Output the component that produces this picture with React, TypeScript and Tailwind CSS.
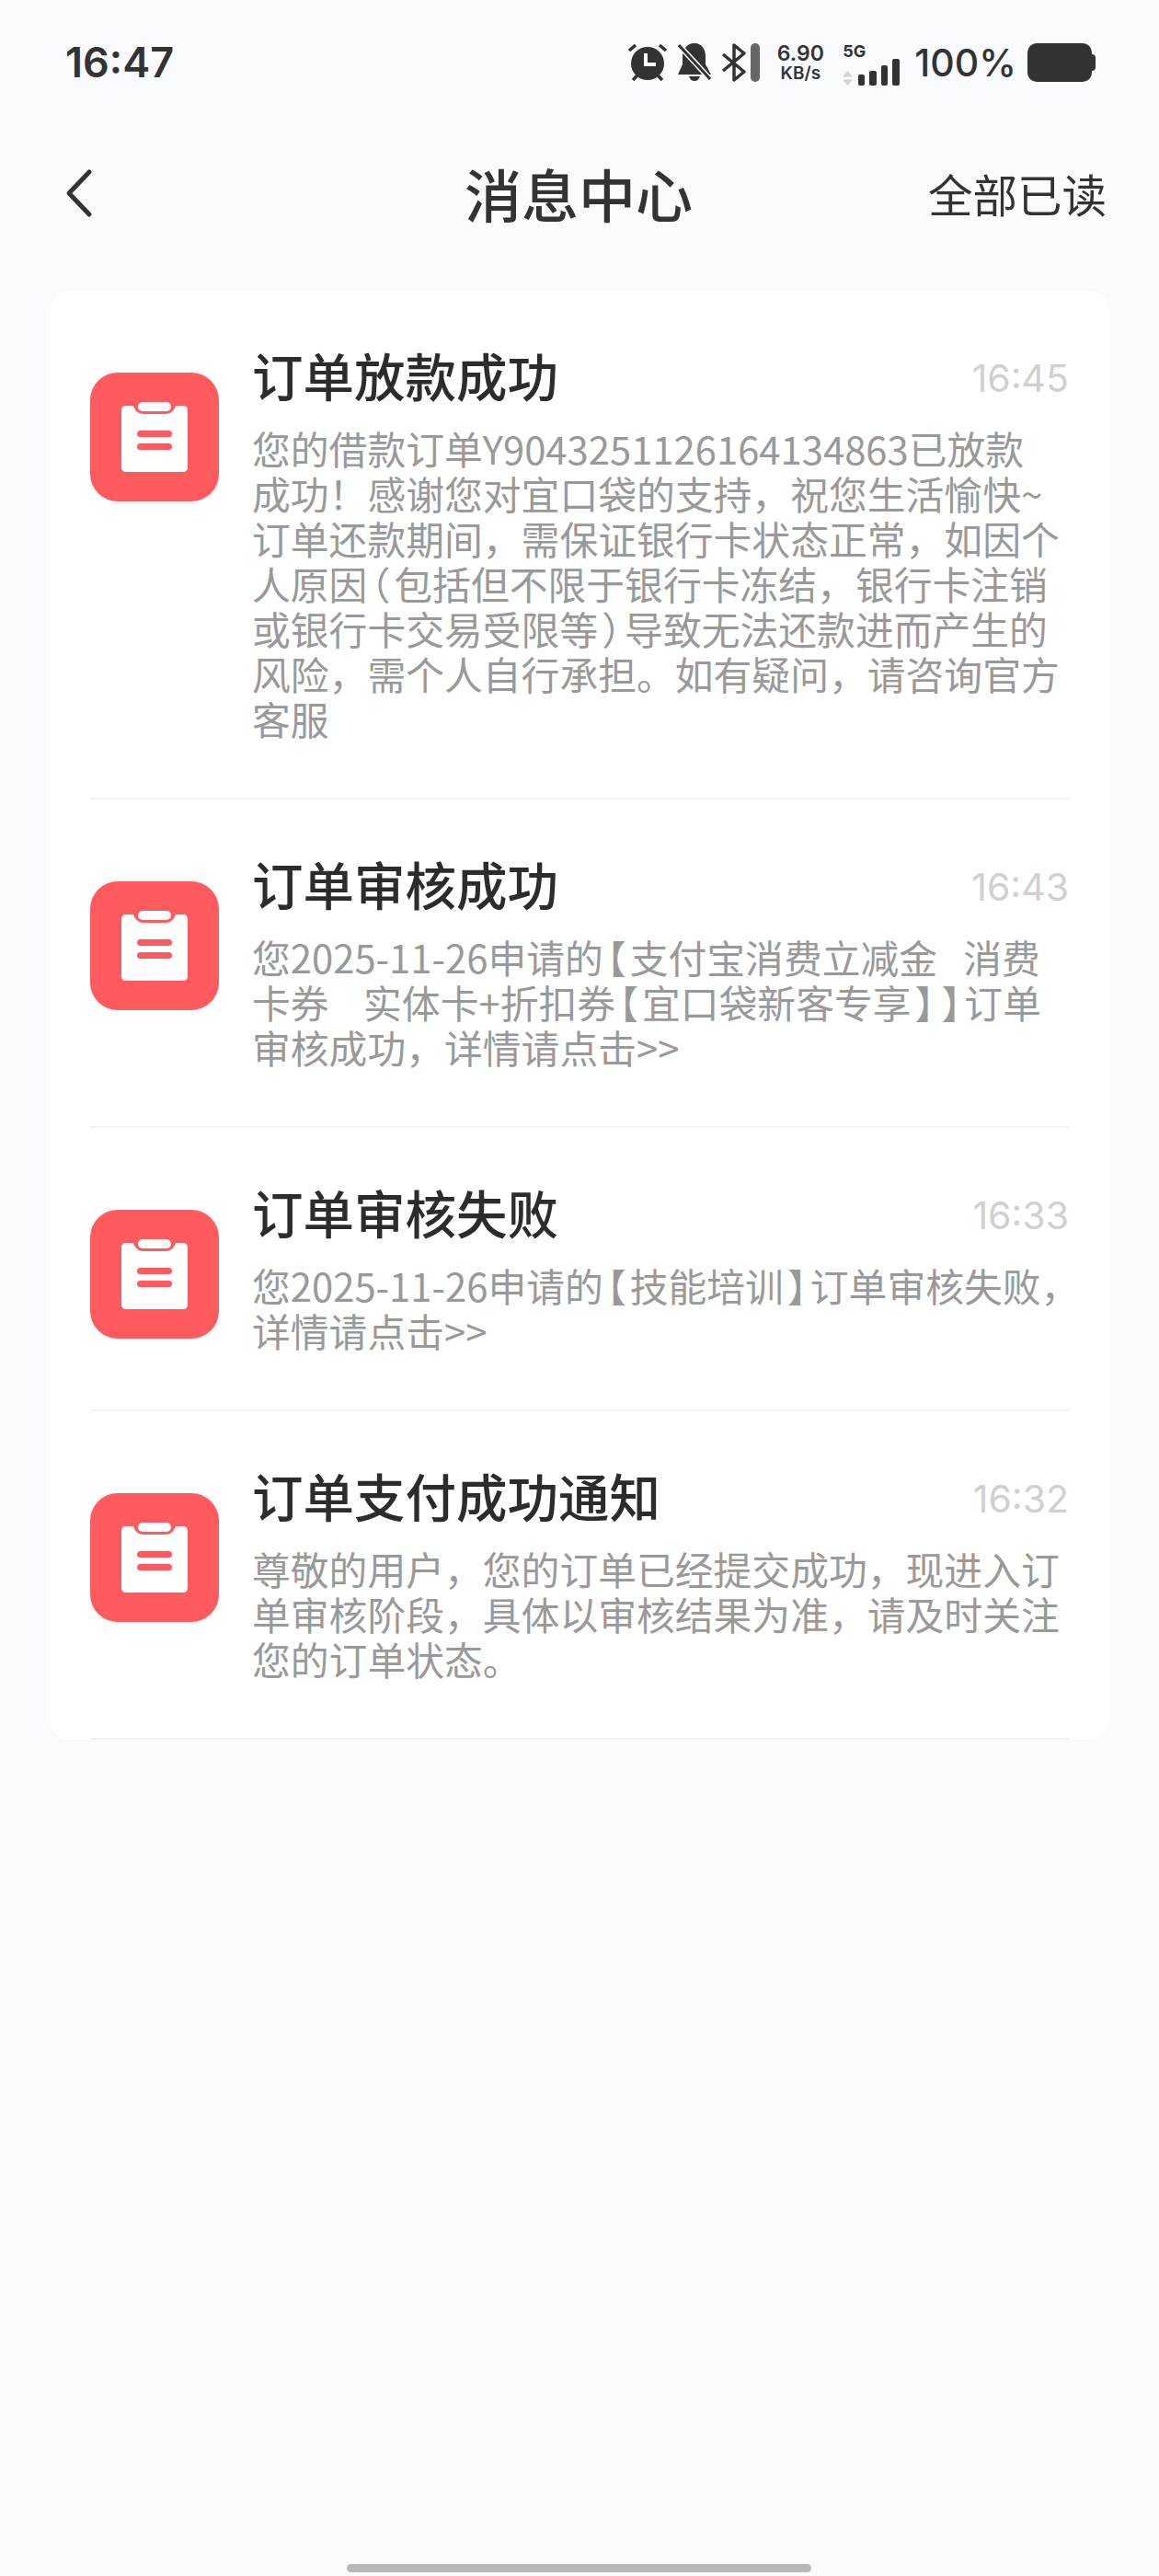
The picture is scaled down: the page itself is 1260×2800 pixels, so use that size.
const items = [
  {
    title: "订单放款成功",
    time: "16:45",
    lines: [
      "您的借款订单Y9043251126164134863已放款",
      "成功！感谢您对宜口袋的支持，祝您生活愉快~",
      "订单还款期间，需保证银行卡状态正常，如因个",
      "人原因（包括但不限于银行卡冻结，银行卡注销",
      "或银行卡交易受限等）导致无法还款进而产生的",
      "风险，需个人自行承担。如有疑问，请咨询官方",
      "客服",
    ],
  },
  {
    title: "订单审核成功",
    time: "16:43",
    lines: [
      "您2025-11-26申请的【支付宝消费立减金   消费",
      "卡券    实体卡+折扣券【宜口袋新客专享】】订单",
      "审核成功，详情请点击>>",
    ],
  },
  {
    title: "订单审核失败",
    time: "16:33",
    lines: ["您2025-11-26申请的【技能培训】订单审核失败，", "详情请点击>>"],
  },
  {
    title: "订单支付成功通知",
    time: "16:32",
    lines: [
      "尊敬的用户，您的订单已经提交成功，现进入订",
      "单审核阶段，具体以审核结果为准，请及时关注",
      "您的订单状态。",
    ],
  },
];

// brackets and parens are narrower in the reference font
function BodyLine({ text }: { text: string }) {
  const parts = text.split(/([【】（）])/);
  return (
    <div className="whitespace-pre">
      {parts.map((part, i) =>
        /^[【】（）]$/.test(part) ? (
          <span key={i} className="px-[4px] [font-feature-settings:'halt']">
            {part}
          </span>
        ) : (
          part
        ),
      )}
    </div>
  );
}

function ClipboardIcon() {
  return (
    <svg width="140" height="140" viewBox="0 0 140 140" className="mt-[29px] shrink-0">
      <rect width="140" height="140" rx="30" fill="#ff5a5d" />
      <path
        d="M39 36h8c2 6 6 9 11 9h24c5 0 9-3 11-9h8c3 0 5 2 5 5v62c0 3-2 5-5 5H39c-3 0-5-2-5-5V41c0-3 2-5 5-5z"
        fill="#fff"
      />
      <rect x="52" y="32" width="36" height="10" rx="5" fill="#fff" />
      <rect x="51" y="63" width="38" height="7" rx="3.5" fill="#ff5a5d" />
      <rect x="51" y="77" width="38" height="7" rx="3.5" fill="#ff5a5d" />
    </svg>
  );
}

function StatusIcons() {
  return (
    <div className="flex items-center text-[#333]">
      <svg width="44" height="42" viewBox="0 0 44 42" fill="none" className="mr-[11px]">
        <circle cx="22" cy="22" r="18" fill="#333" />
        <path d="M20 11v12h11" stroke="#fff" strokeWidth="4" />
        <path d="M2 8l7-6M42 8l-7-6M6 40l5-5M38 40l-5-5" stroke="#333" strokeWidth="3.5" />
      </svg>
      <svg width="36" height="42" viewBox="0 0 36 42" className="mr-[11px]">
        <path d="M18 0c8 0 12 7 12 14v9l6 11H0l5-11V13C6 6 10 0 18 0z" fill="#333" />
        <path d="M12 36h12c-1 3-3 5-6 5s-5-2-6-5z" fill="#333" />
        <path d="M1 2l34 37" stroke="#fafbff" strokeWidth="6" />
        <path d="M1 2l34 37" stroke="#333" strokeWidth="3" />
      </svg>
      <svg width="27" height="42" viewBox="0 0 27 42" fill="none" className="mr-[5px]">
        <path d="M2 12l23 19-11 9V2l11 9L2 30" stroke="#333" strokeWidth="3.5" strokeLinejoin="round" />
      </svg>
      <div className="mr-[19px] h-[42px] w-[10px] rounded-full bg-[#666]" />
      <div className="mr-[21px] flex w-[50px] flex-col items-center font-semibold leading-none">
        <span className="text-[23px] leading-[23px]">6.90</span>
        <span className="text-[19px] leading-[19px]">KB/s</span>
      </div>
      <div className="mr-[14px] flex h-[42px] w-[64px] flex-col justify-between">
        <span className="text-[18px] font-bold leading-[17px]">5G</span>
        <div className="flex items-end gap-[5px]">
          <svg width="11" height="16" viewBox="0 0 11 16" className="mr-[1px]">
            <path d="M5.5 0L11 6.5H0zM5.5 16L11 9.5H0z" fill="#d4d4d8" />
          </svg>
          <div className="h-[12px] w-[7px] rounded-[2px] bg-[#333]" />
          <div className="h-[16px] w-[8px] rounded-[2px] bg-[#333]" />
          <div className="h-[22px] w-[7px] rounded-[2px] bg-[#333]" />
          <div className="h-[29px] w-[8px] rounded-[2px] bg-[#333]" />
        </div>
      </div>
      <span className="mr-[12px] text-[41px] font-medium leading-none">100%</span>
      <div className="relative mr-[4px] h-[42px] w-[70px] rounded-[10px] bg-[#333]">
        <div className="absolute right-[-4px] top-[12px] h-[18px] w-[4px] rounded-r bg-[#333]" />
      </div>
    </div>
  );
}

export default function App() {
  return (
    <div className="relative min-h-[2800px] w-[1260px] overflow-hidden bg-[#fafbff] font-['Noto_Sans_CJK_SC',Inter,sans-serif] text-[#333]">
      <div className="flex h-[89px] items-center justify-between pl-[71px] pr-[69px] pt-[47px] font-['Inter',sans-serif]">
        <span className="text-[45px] font-semibold leading-[42px]">16:47</span>
        <StatusIcons />
      </div>

      <div className="relative mt-[81px] flex h-[80px] items-center justify-between pl-[70px] pr-[57px]">
        <svg width="32" height="54" viewBox="0 0 32 54" fill="none">
          <path d="M27 4L5 27l22 23" stroke="#333" strokeWidth="5" strokeLinecap="round" strokeLinejoin="round" />
        </svg>
        <span className="absolute left-[505px] top-0 text-[62px] font-medium leading-[80px]">消息中心</span>
        <span className="text-[48.5px] leading-[80px]">全部已读</span>
      </div>

      <div className="mx-[55px] mt-[66px] rounded-[20px] bg-white px-[43px] shadow-[0_0_6px_rgba(0,0,0,0.015)]">
        {items.map((item) => (
          <div key={item.title} className="border-b-2 border-[#f3f3f5] pb-[61px] pt-[60px]">
            <div className="flex gap-[36px]">
              <ClipboardIcon />
              <div className="min-w-0 flex-1">
                <div className="flex items-start justify-between">
                  <span className="text-[55.5px] font-medium leading-[62px] text-[#2c2c2c]">{item.title}</span>
                  <span className="font-['Inter',sans-serif] text-[41px] leading-[70px] text-[#d0d0d0]">{item.time}</span>
                </div>
                <div className="mt-[17px] text-[41.8px] leading-[49px] text-[#999]">
                  {item.lines.map((line) => (
                    <BodyLine key={line} text={line} />
                  ))}
                </div>
              </div>
            </div>
          </div>
        ))}
      </div>

      <div className="absolute bottom-[4px] left-[377px] h-[9px] w-[505px] rounded-full bg-[#b9b9bb]" />
    </div>
  );
}
